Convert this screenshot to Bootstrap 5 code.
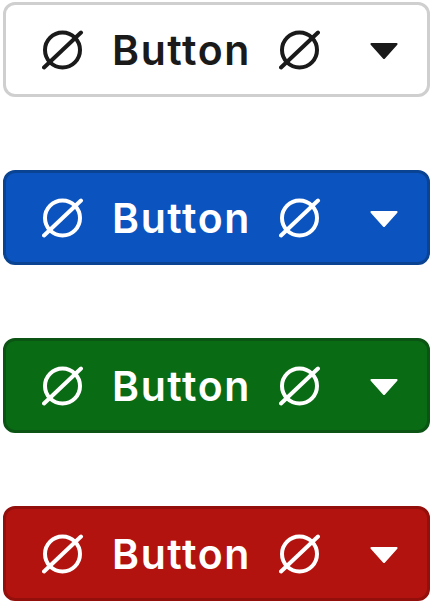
<!DOCTYPE html>
<html lang="en">

<head>
    <meta charset="UTF-8">
    <meta name="viewport" content="width=device-width, initial-scale=1.0">
    <title>Buttons</title>
    <link href="https://cdn.jsdelivr.net/npm/bootstrap@5.3.0/dist/css/bootstrap.min.css" rel="stylesheet">
    <style>
        body { background: #fff; overflow: hidden; }
        .stack { padding: 2px 0 0 3px; gap: 73px; }
        .big-btn {
            height: 95px;
            width: 427px;
            padding: 0 0 0 36px;
            border-width: 3px;
            border-style: solid;
            border-radius: 12px;
            font-family: Inter, sans-serif;
            font-weight: 600;
            font-size: 41px;
            letter-spacing: 1.6px;
            line-height: 1;
        }
        .btn-plain, .btn-plain:hover { background: #fff; border-color: #cfcfcf; color: #1a1a1a; }
        .btn-blue, .btn-blue:hover { background: #0b53bf; border-color: #0a4391; color: #fff; }
        .btn-green, .btn-green:hover { background: #0a6b15; border-color: #0b5414; color: #fff; }
        .btn-red, .btn-red:hover { background: #b2130f; border-color: #930f0c; color: #fff; }
        .ico { width: 42px; height: 42px; flex: none; }
        .btn-label { width: 138px; margin: 2px 29px 0 28px; }
        .caret { width: 30px; height: 18px; flex: none; margin: 3px 0 0 48px; }
    </style>
</head>

<body>
    <svg width="0" height="0" class="d-none">
        <symbol id="slashed" viewBox="0 0 42 42">
            <circle cx="20.500" cy="21" r="17.500" fill="none" stroke="currentColor" stroke-width="4"/>
            <path d="M39 3.500 2 38.500" fill="none" stroke="currentColor" stroke-width="4" stroke-linecap="round"/>
        </symbol>
        <symbol id="down" viewBox="0 0 30 18">
            <path d="M2.500 1h25a1 1 0 0 1 .8 1.700L16 16.500a1.400 1.400 0 0 1-2 0L1.700 2.700A1 1 0 0 1 2.500 1z" fill="currentColor"/>
        </symbol>
    </svg>

    <div class="stack d-flex flex-column">
        <button type="button" class="btn big-btn btn-plain d-flex align-items-center">
            <svg class="ico"><use href="#slashed"/></svg>
            <span class="btn-label">Button</span>
            <svg class="ico"><use href="#slashed"/></svg>
            <svg class="caret"><use href="#down"/></svg>
        </button>
        <button type="button" class="btn big-btn btn-blue d-flex align-items-center">
            <svg class="ico"><use href="#slashed"/></svg>
            <span class="btn-label">Button</span>
            <svg class="ico"><use href="#slashed"/></svg>
            <svg class="caret"><use href="#down"/></svg>
        </button>
        <button type="button" class="btn big-btn btn-green d-flex align-items-center">
            <svg class="ico"><use href="#slashed"/></svg>
            <span class="btn-label">Button</span>
            <svg class="ico"><use href="#slashed"/></svg>
            <svg class="caret"><use href="#down"/></svg>
        </button>
        <button type="button" class="btn big-btn btn-red d-flex align-items-center">
            <svg class="ico"><use href="#slashed"/></svg>
            <span class="btn-label">Button</span>
            <svg class="ico"><use href="#slashed"/></svg>
            <svg class="caret"><use href="#down"/></svg>
        </button>
    </div>

    <script src="https://cdn.jsdelivr.net/npm/bootstrap@5.3.0/dist/js/bootstrap.bundle.min.js"></script>
</body>

</html>
